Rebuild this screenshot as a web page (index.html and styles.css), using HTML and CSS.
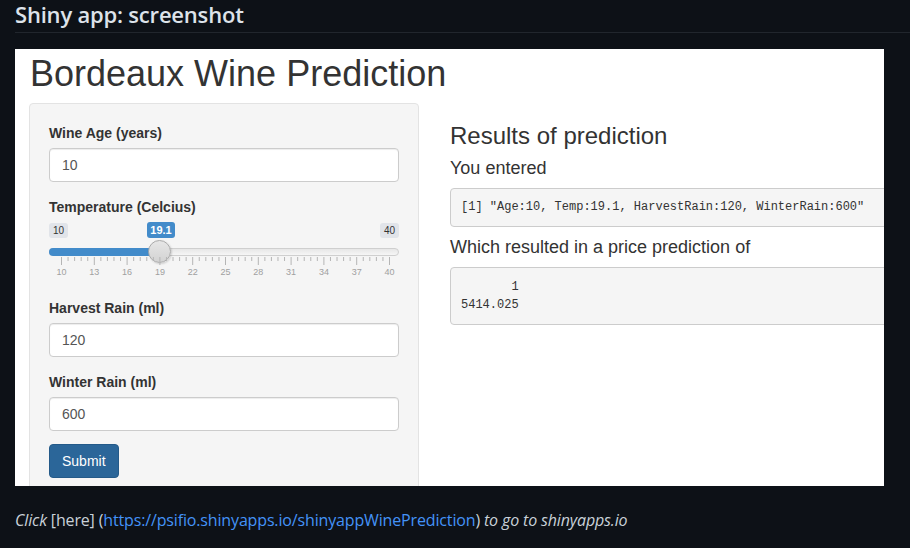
FILE: index.html
```html
<!DOCTYPE html>
<html>
<head>
<meta charset="utf-8">
<link rel="stylesheet" href="styles.css">
</head>
<body>
<header class="top">
  <h1 class="top-title">Shiny app: screenshot</h1>
</header>
<div class="frame">
  <div class="app">
    <h2 class="app-title">Bordeaux Wine Prediction</h2>
    <div class="row">
      <div class="well">
        <div class="group">
          <label class="lbl">Wine Age (years)</label>
          <input class="field" type="text" value="10">
        </div>
        <div class="group">
          <label class="lbl">Temperature (Celcius)</label>
          <div class="slider">
            <span class="s-min">10</span>
            <span class="s-max">40</span>
            <span class="s-val">19.1</span>
            <div class="s-track"></div>
            <div class="s-bar"></div>
            <div class="s-handle"></div>
            <svg class="s-grid" width="350" height="26" viewBox="0 0 350 26">
              <g stroke="#b5b5b5" stroke-width="1">
                <path d="M12.5 0v8M45.3 0v8M78.1 0v8M110.9 0v8M143.7 0v8M176.5 0v8M209.3 0v8M242.1 0v8M274.9 0v8M307.7 0v8M340.5 0v8"/>
                <path d="M19.06 0v4M25.62 0v4M32.18 0v4M38.74 0v4M51.86 0v4M58.42 0v4M64.98 0v4M71.54 0v4M84.66 0v4M91.22 0v4M97.78 0v4M104.34 0v4M117.46 0v4M124.02 0v4M130.58 0v4M137.14 0v4M150.26 0v4M156.82 0v4M163.38 0v4M169.94 0v4M183.06 0v4M189.62 0v4M196.18 0v4M202.74 0v4M215.86 0v4M222.42 0v4M228.98 0v4M235.54 0v4M248.66 0v4M255.22 0v4M261.78 0v4M268.34 0v4M281.46 0v4M288.02 0v4M294.58 0v4M301.14 0v4M314.26 0v4M320.82 0v4M327.38 0v4M333.94 0v4"/>
              </g>
              <g class="s-nums" fill="#a0a0a0" text-anchor="middle">
                <text x="12.5" y="18">10</text>
                <text x="45.3" y="18">13</text>
                <text x="78.1" y="18">16</text>
                <text x="110.9" y="18">19</text>
                <text x="143.7" y="18">22</text>
                <text x="176.5" y="18">25</text>
                <text x="209.3" y="18">28</text>
                <text x="242.1" y="18">31</text>
                <text x="274.9" y="18">34</text>
                <text x="307.7" y="18">37</text>
                <text x="340.5" y="18">40</text>
              </g>
            </svg>
          </div>
        </div>
        <div class="group">
          <label class="lbl">Harvest Rain (ml)</label>
          <input class="field" type="text" value="120">
        </div>
        <div class="group">
          <label class="lbl">Winter Rain (ml)</label>
          <input class="field" type="text" value="600">
        </div>
        <button class="btn" type="button">Submit</button>
      </div>
      <div class="main">
        <h3 class="res-title">Results of prediction</h3>
        <h4 class="res-sub">You entered</h4>
        <pre class="out">[1] "Age:10, Temp:19.1, HarvestRain:120, WinterRain:600"</pre>
        <h4 class="res-sub">Which resulted in a price prediction of</h4>
        <pre class="out">       1 
5414.025 </pre>
      </div>
    </div>
  </div>
</div>
<p class="footer"><em>Click</em> [here] (<a class="link" href="#">https://psifio.shinyapps.io/shinyappWinePrediction</a>) <em>to go to shinyapps.io</em></p>
</body>
</html>
```
FILE: styles.css
```css
* { box-sizing: border-box; }
html, body { margin: 0; padding: 0; }
body {
  background: #0d1117;
  font-family: "Open Sans", "Noto Sans", sans-serif;
  color: #c9d1d9;
  width: 910px;
  height: 548px;
  overflow: hidden;
}
.top {
  margin-left: 15px;
  border-bottom: 1px solid #21262d;
  height: 33px;
}
.top-title {
  margin: 0;
  font-size: 22px;
  font-weight: 600;
  line-height: 28px;
  color: #dde3ea;
  letter-spacing: -0.2px;
}
.frame {
  margin: 16px 0 0 15px;
  width: 869px;
  height: 437px;
  background: #fff;
  overflow: hidden;
}
.app {
  width: 1000px;
  padding-left: 15px;
  font-family: "Liberation Sans", Arial, sans-serif;
  color: #333;
}
.app-title {
  margin: 5px 0 9px;
  font-size: 36px;
  font-weight: 500;
  line-height: 1.1;
}
.row {
  display: flex;
  margin-left: -1px;
}
.well {
  width: 390px;
  flex: none;
  background: #f5f5f5;
  border: 1px solid #e3e3e3;
  border-radius: 4px;
  padding: 19px;
  min-height: 420px;
}
.group { margin-bottom: 15px; }
.lbl {
  display: block;
  margin-bottom: 5px;
  font-size: 14px;
  font-weight: bold;
  line-height: 20px;
}
.field {
  display: block;
  width: 100%;
  height: 34px;
  padding: 6px 12px;
  font: 14px/20px "Liberation Sans", Arial, sans-serif;
  color: #555;
  background: #fff;
  border: 1px solid #ccc;
  border-radius: 4px;
  box-shadow: inset 0 1px 1px rgba(0,0,0,.075);
}
.slider {
  position: relative;
  height: 61px;
}
.s-min, .s-max {
  position: absolute;
  top: 1px;
  height: 15px;
  padding: 0 4px;
  font-size: 10px;
  line-height: 15px;
  color: #333;
  background: #e1e4e9;
  border-radius: 3px;
}
.s-min { left: 0; }
.s-max { right: 0; }
.s-val {
  position: absolute;
  left: 98px;
  top: 0;
  width: 28px;
  height: 16px;
  text-align: center;
  font-size: 11px;
  font-weight: bold;
  line-height: 16px;
  color: #fff;
  background: #428bca;
  border-radius: 3px;
}
.s-track {
  position: absolute;
  left: 0;
  right: 0;
  top: 26px;
  height: 8px;
  border: 1px solid #cfcfcf;
  border-radius: 4px;
  background: linear-gradient(#e7e7e7, #f6f6f6);
}
.s-bar {
  position: absolute;
  left: 0;
  width: 112px;
  top: 26px;
  height: 8px;
  border-radius: 4px 0 0 4px;
  background: #428bca;
}
.s-handle {
  position: absolute;
  left: 99px;
  top: 18px;
  width: 23px;
  height: 23px;
  border-radius: 50%;
  border: 1px solid #aaa;
  background: linear-gradient(#e6e6e6, #d3d3d3);
  box-shadow: 1px 1px 2px rgba(0,0,0,.15);
}
.s-grid {
  position: absolute;
  left: 0;
  top: 35px;
}
.s-nums {
  font-family: "Liberation Sans", Arial, sans-serif;
  font-size: 9px;
}
.btn {
  display: block;
  margin-top: -2px;
  height: 34px;
  padding: 6px 12px;
  font: 14px/20px "Liberation Sans", Arial, sans-serif;
  color: #fff;
  background: #2b6699;
  border: 1px solid #245a89;
  border-radius: 4px;
}
.main {
  flex: 1;
  padding-left: 31px;
}
.res-title {
  margin: 20px 0 10px;
  font-size: 24px;
  font-weight: 500;
  line-height: 1.1;
}
.res-sub {
  margin: 0 0 9px;
  font-size: 18px;
  font-weight: 500;
  line-height: 1.1;
}
.out {
  margin: 0 0 11px;
  padding: 9.5px 10px;
  font: 12px/18.5px "Liberation Mono", "Courier New", monospace;
  color: #333;
  background: #f5f5f5;
  border: 1px solid #ccc;
  border-radius: 4px;
}
.footer {
  margin: 24px 0 0 15px;
  font-size: 16px;
  line-height: 20px;
  letter-spacing: -0.15px;
  color: #c9d1d9;
}
.footer em { font-style: italic; }
.link { color: #4493f8; text-decoration: none; }
```
